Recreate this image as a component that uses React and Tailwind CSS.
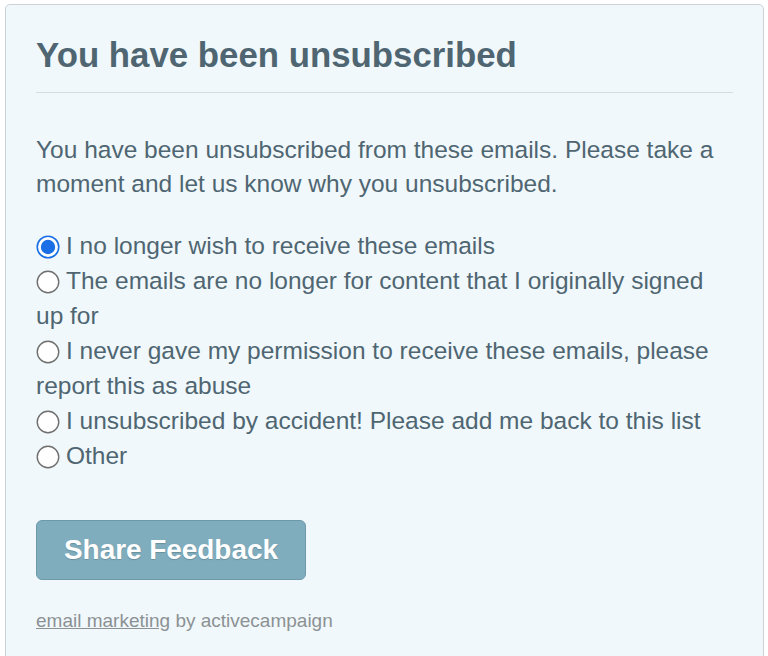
import React, { useState } from 'react';

const reasons = [
  'I no longer wish to receive these emails',
  'The emails are no longer for content that I originally signed up for',
  'I never gave my permission to receive these emails, please report this as abuse',
  'I unsubscribed by accident! Please add me back to this list',
  'Other',
];

const RadioDot = ({ checked }) => (
  <svg width="24" height="24" viewBox="0 0 24 24" className="inline-block align-[-5px] mr-[6px]">
    {checked ? (
      <>
        <circle cx="12" cy="12" r="10.75" fill="#ffffff" stroke="#1a6fe6" strokeWidth="1.6" />
        <circle cx="12" cy="12" r="7.2" fill="#1a6fe6" />
      </>
    ) : (
      <circle cx="12" cy="12" r="10.75" fill="#ffffff" stroke="#6f6f6f" strokeWidth="1.4" />
    )}
  </svg>
);

export default function App() {
  const [selected, setSelected] = useState(0);

  return (
    <div className="min-h-screen bg-white pt-[4px] pl-[5px] pr-[4px] font-['Liberation_Sans',Arial,sans-serif]">
      <div className="min-h-[700px] rounded-[5px] border border-[#c9d2d7] bg-[#f0f8fb] px-[30px] pt-[29px] text-[#4f6672]">
        {/* Header */}
        <h1 className="border-b border-[#d5dde1] pb-[17px] text-[34.8px] font-bold leading-[41px]">
          You have been unsubscribed
        </h1>

        <p className="mt-[40px] text-[24.5px] leading-[34px]">
          You have been unsubscribed from these emails. Please take a moment and let us know why you unsubscribed.
        </p>

        {/* Reasons */}
        <div className="mt-[27px] flex flex-col">
          {reasons.map((reason, i) => (
            <label
              key={reason}
              onClick={() => setSelected(i)}
              className="cursor-pointer text-[24.5px] leading-[35px]"
            >
              <RadioDot checked={selected === i} />
              {reason}
            </label>
          ))}
        </div>

        <button className="mt-[47px] h-[60px] rounded-[6px] border border-[#6c9aab] bg-[#80adbd] px-[27px] text-[27.9px] font-bold text-white [text-shadow:0_1px_1px_rgba(60,90,100,0.35)]">
          Share Feedback
        </button>

        <div className="mt-[30px] text-[19px] leading-[22px] text-[#8c9194]">
          <a href="#" className="underline">email marketing</a> by activecampaign
        </div>
      </div>
    </div>
  );
}
